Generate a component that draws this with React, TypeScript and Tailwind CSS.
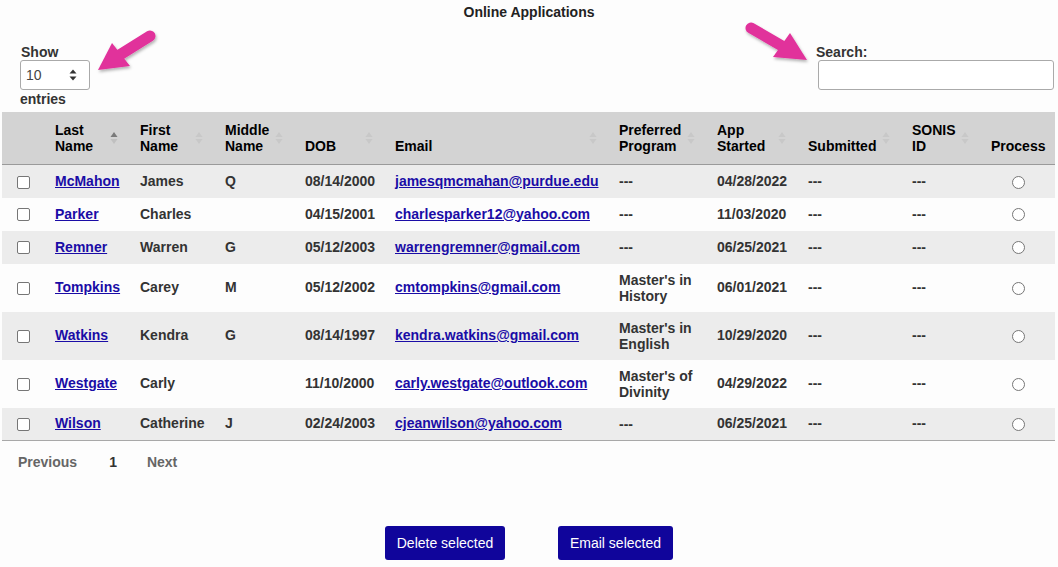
import React from "react";

type Row = {
  last: string;
  first: string;
  middle: string;
  dob: string;
  email: string;
  program: [string, string] | null;
  started: string;
};

const rows: Row[] = [
  { last: "McMahon", first: "James", middle: "Q", dob: "08/14/2000", email: "jamesqmcmahan@purdue.edu", program: null, started: "04/28/2022" },
  { last: "Parker", first: "Charles", middle: "", dob: "04/15/2001", email: "charlesparker12@yahoo.com", program: null, started: "11/03/2020" },
  { last: "Remner", first: "Warren", middle: "G", dob: "05/12/2003", email: "warrengremner@gmail.com", program: null, started: "06/25/2021" },
  { last: "Tompkins", first: "Carey", middle: "M", dob: "05/12/2002", email: "cmtompkins@gmail.com", program: ["Master's in", "History"], started: "06/01/2021" },
  { last: "Watkins", first: "Kendra", middle: "G", dob: "08/14/1997", email: "kendra.watkins@gmail.com", program: ["Master's in", "English"], started: "10/29/2020" },
  { last: "Westgate", first: "Carly", middle: "", dob: "11/10/2000", email: "carly.westgate@outlook.com", program: ["Master's of", "Divinity"], started: "04/29/2022" },
  { last: "Wilson", first: "Catherine", middle: "J", dob: "02/24/2003", email: "cjeanwilson@yahoo.com", program: null, started: "06/25/2021" },
];

function SortIcon({ active }: { active?: boolean }) {
  return (
    <svg width="8" height="14" viewBox="0 0 8 14" className="absolute right-[12px] top-1/2 -translate-y-1/2">
      <polygon points="4,1 7.5,6 0.5,6" fill={active ? "#7a7a7a" : "#c8c8c8"} />
      <polygon points="4,13 7.5,8 0.5,8" fill={active ? "#c0c0c0" : "#c8c8c8"} />
    </svg>
  );
}

function Th({ lines, sort, active, center }: { lines: string[]; sort?: boolean; active?: boolean; center?: boolean }) {
  return (
    <th
      className={`relative align-bottom pl-[10px] pr-[18px] pb-[10px] pt-[10px] font-bold text-black leading-[16px] ${center ? "text-right pr-[10px]" : "text-left"}`}
    >
      {lines.map((l, i) => (
        <div key={i}>{l}</div>
      ))}
      {sort && <SortIcon active={active} />}
    </th>
  );
}

function Arrow({ x1, y1, x2, y2, tip, b1, b2 }: { x1: number; y1: number; x2: number; y2: number; tip: [number, number]; b1: [number, number]; b2: [number, number] }) {
  return (
    <g filter="url(#shadow)">
      <line x1={x1} y1={y1} x2={x2} y2={y2} stroke="#e1319b" strokeWidth="11" strokeLinecap="round" />
      <polygon points={`${tip[0]},${tip[1]} ${b1[0]},${b1[1]} ${b2[0]},${b2[1]}`} fill="#e1319b" />
    </g>
  );
}

export default function App() {
  return (
    <div
      className="relative w-[1058px] h-[567px] overflow-hidden bg-[#fdfdfd] text-[14px] text-[#333]"
      style={{ fontFamily: '"Liberation Sans", Arial, sans-serif' }}
    >
      <div className="pt-[4px] text-center font-bold leading-[16px] text-[#222]">Online Applications</div>

      <div className="mt-[24px] flex justify-between pl-[20px] pr-[4px]">
        <div className="flex flex-col items-start">
          <div className="font-bold leading-[16px] text-[#333] ml-[1px]">Show</div>
          <div className="flex h-[30px] w-[70px] items-center justify-between rounded-[3px] border border-[#aaa] bg-white pl-[5px] pr-[12px] text-[#444]">
            <span>10</span>
            <svg width="8" height="12" viewBox="0 0 8 12">
              <polygon points="4,0.5 7.5,4.5 0.5,4.5" fill="#333" />
              <polygon points="4,11.5 7.5,7.5 0.5,7.5" fill="#333" />
            </svg>
          </div>
          <div className="mt-[1px] font-bold leading-[16px] text-[#333]">entries</div>
        </div>
        <div className="flex flex-col items-start">
          <div className="-ml-[2px] font-bold leading-[16px] text-[#333]">Search:</div>
          <div className="h-[30px] w-[236px] rounded-[3px] border border-[#aaa] bg-white" />
        </div>
      </div>

      <table className="ml-[2px] mt-[5px] w-[1053px] table-fixed border-collapse">
        <colgroup>
          <col className="w-[43px]" />
          <col className="w-[85px]" />
          <col className="w-[85px]" />
          <col className="w-[80px]" />
          <col className="w-[90px]" />
          <col className="w-[224px]" />
          <col className="w-[98px]" />
          <col className="w-[91px]" />
          <col className="w-[104px]" />
          <col className="w-[79px]" />
          <col className="w-[74px]" />
        </colgroup>
        <thead>
          <tr className="h-[52px] bg-[#d3d3d3] border-b border-[#9a9a9a]">
            <th />
            <Th lines={["Last", "Name"]} sort active />
            <Th lines={["First", "Name"]} sort />
            <Th lines={["Middle", "Name"]} sort />
            <Th lines={["DOB"]} sort />
            <Th lines={["Email"]} sort />
            <Th lines={["Preferred", "Program"]} sort />
            <Th lines={["App", "Started"]} sort />
            <Th lines={["Submitted"]} sort />
            <Th lines={["SONIS", "ID"]} sort />
            <Th lines={["Process"]} center />
          </tr>
        </thead>
        <tbody>
          {rows.map((r, i) => (
            <tr
              key={r.last}
              className={`${r.program ? "h-[48px]" : "h-[33px]"} ${i % 2 === 0 ? "bg-[#ececec]" : "bg-[#fdfdfd]"} ${i === rows.length - 1 ? "border-b border-[#a8a8a8]" : ""}`}
            >
              <td className="text-center align-middle">
                <span className="inline-block h-[13px] w-[13px] rounded-[2px] border border-[#767676] bg-white align-middle" />
              </td>
              <td className="px-[10px] font-bold">
                <a className="text-[#1a0ca6] underline">{r.last}</a>
              </td>
              <td className="px-[10px] font-bold">{r.first}</td>
              <td className="px-[10px] font-bold">{r.middle}</td>
              <td className="px-[10px] font-bold">{r.dob}</td>
              <td className="px-[10px] font-bold whitespace-nowrap">
                <a className="text-[#1a0ca6] underline">{r.email}</a>
              </td>
              <td className="px-[10px] font-bold leading-[16px]">
                {r.program ? (
                  <>
                    <div>{r.program[0]}</div>
                    <div>{r.program[1]}</div>
                  </>
                ) : (
                  "---"
                )}
              </td>
              <td className="px-[10px] font-bold">{r.started}</td>
              <td className="px-[10px] font-bold">---</td>
              <td className="px-[10px] font-bold">---</td>
              <td className="text-center align-middle">
                <span className="inline-block h-[13px] w-[13px] rounded-full border border-[#767676] bg-white align-middle" />
              </td>
            </tr>
          ))}
        </tbody>
      </table>

      <div className="mt-[13px] flex items-center pl-[18px] font-bold leading-[16px]">
        <span className="text-[#666]">Previous</span>
        <span className="ml-[32px] text-[#333]">1</span>
        <span className="ml-[30px] text-[#666]">Next</span>
      </div>

      <div className="mt-[56px] flex justify-center gap-[53px]">
        <button className="h-[34px] w-[120px] rounded-[3px] bg-[#10059b] text-[14px] text-white">Delete selected</button>
        <button className="h-[34px] w-[115px] rounded-[3px] bg-[#10059b] text-[14px] text-white">Email selected</button>
      </div>

      <svg className="pointer-events-none absolute left-0 top-0" width="1058" height="567">
        <defs>
          <filter id="shadow" x="-20%" y="-20%" width="140%" height="140%">
            <feDropShadow dx="1" dy="2" stdDeviation="1.5" floodColor="#000" floodOpacity="0.3" />
          </filter>
        </defs>
        <Arrow x1={150} y1={36} x2={118} y2={56} tip={[98, 70]} b1={[112, 43]} b2={[130, 66]} />
        <Arrow x1={751} y1={28} x2={782} y2={46} tip={[807, 60]} b1={[790, 33]} b2={[773, 57]} />
      </svg>
    </div>
  );
}
